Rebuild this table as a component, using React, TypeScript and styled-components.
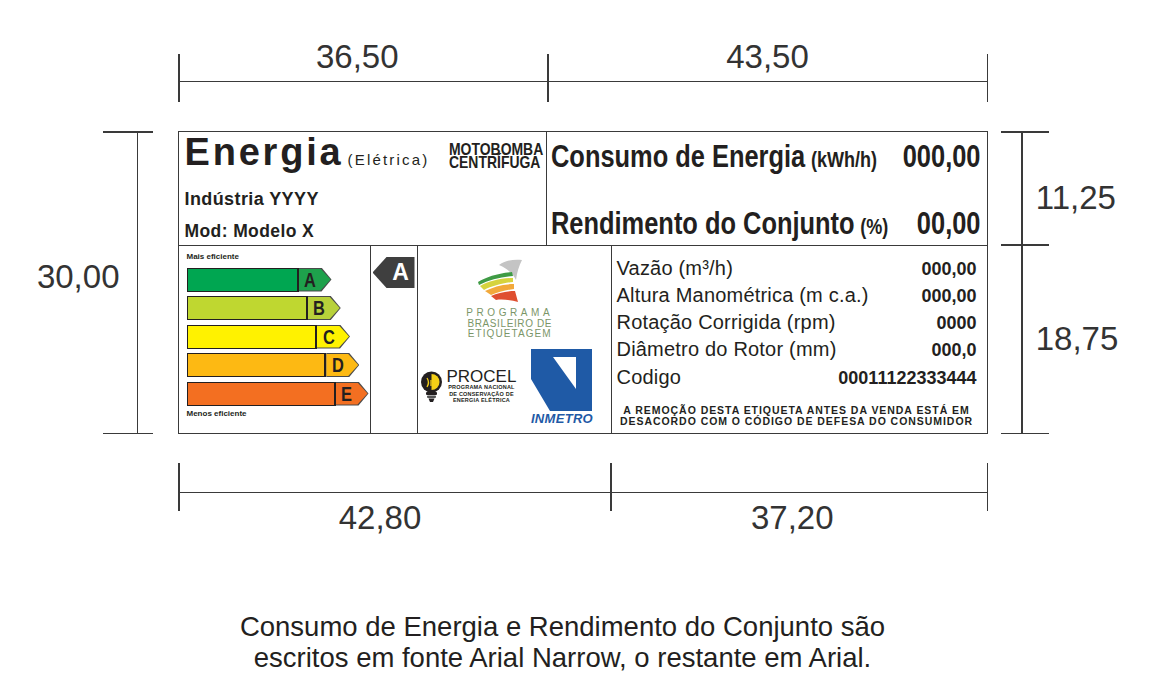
import React from 'react';
import styled, { createGlobalStyle } from 'styled-components';

const INK = '#231f20';
const RULE = '#3a3a3a';
const NARROW_SCALE = 0.82;

const GlobalStyle = createGlobalStyle`
  * { box-sizing: border-box; }
  body {
    margin: 0;
    background: #fff;
    color: ${INK};
    font-family: "Liberation Sans", Arial, sans-serif;
  }
`;

const Sheet = styled.div`
  display: grid;
  grid-template-columns: 178px 810px auto;
  grid-template-rows: 131px 303px auto;
`;

/* ---------- dimension lines ---------- */

const HDimRow = styled.div<{ $below?: boolean }>`
  grid-column: 2;
  grid-row: ${(p) => (p.$below ? 3 : 1)};
  display: flex;
  align-items: ${(p) => (p.$below ? 'flex-start' : 'flex-end')};
  align-self: start;
  padding-top: ${(p) => (p.$below ? 29 : 41)}px;
`;

const HTick = styled.div`
  flex: none;
  width: 1.5px;
  height: 48px;
  background: ${RULE};
`;

const HSpan = styled.div<{ $grow: number }>`
  flex: ${(p) => p.$grow} 1 0;
  display: flex;
  flex-direction: column;
  align-items: center;
`;

const HRule = styled.div<{ $below?: boolean }>`
  align-self: stretch;
  height: 1.5px;
  background: ${RULE};
  margin: ${(p) => (p.$below ? '28.5px 0 9px' : '7.5px 0 19.5px')};
`;

const DimValue = styled.div<{ $nudge?: number; $left?: number }>`
  font-size: 33px;
  line-height: 32px;
  color: #333;
  white-space: nowrap;
  ${(p) =>
    p.$nudge
      ? `${p.$nudge > 0 ? 'padding-top' : 'padding-bottom'}: ${Math.abs(p.$nudge) * 2}px;`
      : ''}
  ${(p) => (p.$left ? `padding-right: ${p.$left * 2}px;` : '')}
`;

const VDim = styled.div<{ $width: number; $side: 'left' | 'right' }>`
  grid-row: 2;
  grid-column: ${(p) => (p.$side === 'left' ? 1 : 3)};
  justify-self: ${(p) => (p.$side === 'left' ? 'end' : 'start')};
  margin: ${(p) => (p.$side === 'left' ? '0 25px 0 0' : '0 0 0 13px')};
  width: ${(p) => p.$width}px;
  display: flex;
  flex-direction: column;
`;

const VTick = styled.div`
  height: 1.5px;
  background: ${RULE};
`;

const VSpan = styled.div<{ $grow: number; $side: 'left' | 'right' }>`
  flex: ${(p) => p.$grow} 1 0;
  display: flex;
  align-items: center;
  flex-direction: ${(p) => (p.$side === 'left' ? 'row-reverse' : 'row')};
  ${(p) => (p.$side === 'left' ? 'padding-right: 15px;' : 'padding-left: 20.25px;')}
  gap: ${(p) => (p.$side === 'left' ? 17 : 13)}px;
`;

const Stem = styled.div`
  align-self: stretch;
  width: 1.5px;
  flex: none;
  background: ${RULE};
`;

/* ---------- the label ---------- */

const Label = styled.div`
  grid-column: 2;
  grid-row: 2;
  border: 1.5px solid ${RULE};
  display: flex;
  flex-direction: column;
  color: ${INK};
`;

const TopBand = styled.div`
  flex: none;
  height: 113.5px;
  display: flex;
  border-bottom: 1.5px solid ${RULE};
`;

const TitleCell = styled.div`
  width: 368px;
  flex: none;
  border-right: 1.5px solid ${RULE};
  padding: 2px 2px 0 5.5px;
  display: flex;
  flex-direction: column;
`;

const HeadRow = styled.div`
  display: flex;
  align-items: baseline;
`;

const Brand = styled.span`
  font-size: 38px;
  line-height: 36px;
  font-weight: 700;
  letter-spacing: 2.8px;
`;

const Kind = styled.span`
  font-size: 15px;
  line-height: 13px;
  letter-spacing: 2.2px;
  margin-left: 4px;
`;

/* Arial Narrow is not installed: squeeze Liberation Sans horizontally */
const Narrow = styled.span<{ $origin?: string }>`
  display: inline-block;
  white-space: nowrap;
  transform: scaleX(${NARROW_SCALE});
  transform-origin: ${(p) => p.$origin ?? 'left'} center;
`;

const Product = styled.div`
  align-self: flex-start;
  flex: none;
  width: 95px;
  margin: 8.5px 0 0 auto;
  font-weight: 700;
  font-size: 17px;
  line-height: 13.5px;
`;

const Maker = styled.div<{ $gap: number; $size: number }>`
  margin-top: ${(p) => p.$gap}px;
  font-size: ${(p) => p.$size}px;
  line-height: 18px;
  font-weight: 700;
  letter-spacing: 0.4px;
`;

const MetricCell = styled.div`
  flex: 1;
  min-width: 0;
  padding: 9px 6.5px 0 4px;
  display: flex;
  flex-direction: column;
  gap: 33px;
`;

const MetricRow = styled.div`
  width: calc(100% / ${NARROW_SCALE});
  transform: scaleX(${NARROW_SCALE});
  transform-origin: left center;
  display: flex;
  align-items: baseline;
  white-space: nowrap;
  font-weight: 700;
  font-size: 31px;
  line-height: 31px;
`;

const MetricUnit = styled.span`
  font-size: 22px;
  margin-left: 7px;
`;

const MetricValue = styled.span`
  margin-left: auto;
`;

const BottomBand = styled.div`
  flex: 1;
  display: flex;
`;

const Cell = styled.div<{ $width?: number }>`
  ${(p) =>
    p.$width
      ? `width: ${p.$width}px; flex: none; border-right: 1.5px solid ${RULE};`
      : 'flex: 1;'}
  display: flex;
  flex-direction: column;
`;

const ScaleCell = styled(Cell)`
  padding: 6.5px 0 0 7.5px;
`;

const ScaleNote = styled.div<{ $gap: number }>`
  margin-top: ${(p) => p.$gap}px;
  font-size: 8px;
  line-height: 9px;
  font-weight: 700;
`;

const Bars = styled.div`
  display: flex;
  flex-direction: column;
  gap: 4.5px;
  margin-top: 6.5px;
`;

const Bar = styled.div`
  display: flex;
  height: 24px;
`;

const BarFill = styled.div<{ $color: string }>`
  background: ${(p) => p.$color};
  border: 1.5px solid ${INK};
  border-right-width: 2.5px;
`;

const BarTag = styled.div`
  width: 33px;
  background: #4a4a4a;
  padding: 1px 1px 1px 0;
  display: flex;
  clip-path: polygon(0 0, 23px 0, 100% 50%, 23px 100%, 0 100%);
`;

const BarTagFace = styled.div<{ $color: string }>`
  flex: 1;
  background: ${(p) => p.$color};
  clip-path: polygon(0 0, 22px 0, 100% 50%, 22px 100%, 0 100%);
  font-weight: 700;
  font-size: 20px;
  line-height: 22px;
  padding-left: 5.5px;
`;

const IndicatorCell = styled(Cell)`
  padding: 11.5px 0 0 1.5px;
`;

const Indicator = styled.div`
  width: 42px;
  height: 31px;
  background: #3f3f3f;
  clip-path: polygon(0 50%, 14px 0, 100% 0, 100% 100%, 14px 100%);
  padding-left: 14px;
  color: #fff;
  font-weight: 700;
  font-size: 23px;
  line-height: 31px;
  text-align: center;
`;

const LogoCell = styled(Cell)`
  padding: 12px 0 0 1.5px;
`;

const Pbe = styled.div`
  align-self: center;
  margin-right: 11px;
  display: flex;
  flex-direction: column;
  align-items: center;
`;

const PbeMark = styled.svg`
  margin: 0 20px 4.5px 0;
`;

const PbeLine = styled.div<{ $spacing: number }>`
  font-size: 10px;
  line-height: 10.5px;
  letter-spacing: ${(p) => p.$spacing}px;
  color: #7b9668;
  white-space: nowrap;
`;

const SealRow = styled.div`
  display: flex;
  align-items: center;
  margin-top: 9px;
`;

const Procel = styled.div`
  display: flex;
  align-items: center;
  gap: 4px;
`;

const ProcelText = styled.div`
  display: flex;
  flex-direction: column;
  align-items: center;
`;

const ProcelName = styled.div`
  font-size: 17px;
  line-height: 15px;
`;

const ProcelFine = styled.div`
  font-size: 5.5px;
  line-height: 6.5px;
  font-weight: 700;
  letter-spacing: 0.2px;
  white-space: nowrap;
`;

const Inmetro = styled.div`
  margin: 0 18px 0 auto;
  display: flex;
  flex-direction: column;
  align-items: center;
`;

const InmetroName = styled.div`
  margin-top: 1px;
  font-size: 13px;
  line-height: 13px;
  font-weight: 700;
  font-style: italic;
  letter-spacing: 0.3px;
  color: #1f5aa6;
`;

const SpecCell = styled(Cell)`
  padding: 9px 10.5px 0 4.5px;
`;

const SpecRow = styled.div`
  display: flex;
  justify-content: space-between;
  align-items: baseline;
  line-height: 26.3px;
`;

const SpecName = styled.span`
  font-size: 20px;
  letter-spacing: 0.2px;
`;

const SpecValue = styled.span`
  font-size: 18px;
  font-weight: 700;
`;

const Notice = styled.div`
  margin-top: 14.5px;
  font-size: 10.5px;
  line-height: 11px;
  font-weight: 700;
  letter-spacing: 0.95px;
  text-align: center;
  white-space: nowrap;
`;

const Caption = styled.div`
  margin-top: 77px;
  padding-right: 26px;
  text-align: center;
  font-size: 27.5px;
  line-height: 31px;
  color: ${INK};
`;

const bars = [
  { letter: 'A', fill: '#00a651', tag: '#1ea14c' },
  { letter: 'B', fill: '#bfd730', tag: '#b8d13a' },
  { letter: 'C', fill: '#fff200', tag: '#fff200' },
  { letter: 'D', fill: '#fdb913', tag: '#fdb913' },
  { letter: 'E', fill: '#f36f21', tag: '#f36f21' },
];

const specs = [
  ['Vazão (m³/h)', '000,00'],
  ['Altura Manométrica (m c.a.)', '000,00'],
  ['Rotação Corrigida (rpm)', '0000'],
  ['Diâmetro do Rotor (mm)', '000,0'],
  ['Codigo', '00011122333444'],
];

type Part = { value: string; span: number; nudge?: number; left?: number };

const HDimension = ({ parts, below }: { parts: Part[]; below?: boolean }) => (
  <HDimRow $below={below}>
    <HTick />
    {parts.map((p) => (
      <React.Fragment key={p.value}>
        <HSpan $grow={p.span}>
          {!below && <DimValue $left={p.left}>{p.value}</DimValue>}
          <HRule $below={below} />
          {below && <DimValue $left={p.left}>{p.value}</DimValue>}
        </HSpan>
        <HTick />
      </React.Fragment>
    ))}
  </HDimRow>
);

const VDimension = ({ parts, side }: { parts: Part[]; side: 'left' | 'right' }) => (
  <VDim $side={side} $width={side === 'left' ? 50 : 48}>
    <VTick />
    {parts.map((p) => (
      <React.Fragment key={p.value}>
        <VSpan $grow={p.span} $side={side}>
          <Stem />
          <DimValue $nudge={p.nudge}>{p.value}</DimValue>
        </VSpan>
        <VTick />
      </React.Fragment>
    ))}
  </VDim>
);

const Swoosh = () => (
  <PbeMark width="46" height="46" viewBox="0 0 46 46">
    <path d="M22 7C29 2 38 1 45 2C42 8 40 14 39 22C36 16 31 11 22 7Z" fill="#c4c4c4" />
    <path d="M1 24C9 19 21 15 35 14L36 18C24 19 12 22 2 27Z" fill="#3f9b45" />
    <path d="M3 28C12 23 24 20 36 20L36 24C26 25 15 28 7 32Z" fill="#d6d33e" />
    <path d="M8 33C16 29 26 26 37 26L37 31C29 32 21 34 14 37Z" fill="#f2a93b" />
    <path d="M14 38C21 35 29 33 38 33L41 44C34 42 25 41 19 42Z" fill="#df4f30" />
  </PbeMark>
);

const Bulb = () => (
  <svg width="23" height="32" viewBox="0 0 23 32">
    <circle cx="11.5" cy="11" r="10.5" fill={INK} />
    <path d="M11.5 3A8 8 0 0 1 11.5 19Z" fill="#f4cf16" />
    <path d="M7 7C9 10 9 13 7 16M11 9V15" stroke="#f4cf16" strokeWidth="1.3" fill="none" />
    <rect x="6" y="21" width="11" height="3" rx="1" fill={INK} />
    <rect x="7" y="24.5" width="9" height="2.5" rx="1" fill="#555" />
    <path d="M8.5 27.5H14.5L13 31H10Z" fill={INK} />
  </svg>
);

const InmetroMark = () => (
  <svg width="61" height="62" viewBox="0 0 61 62">
    <path d="M0 0H61V62H19L0 30ZM22 8L45 40V8Z" fill="#1f5aa6" fillRule="evenodd" />
  </svg>
);

const App = () => (
  <>
    <GlobalStyle />
    <Sheet>
      <HDimension
        parts={[
          { value: '36,50', span: 36.5, left: 6 },
          { value: '43,50', span: 43.5 },
        ]}
      />
      <VDimension side="left" parts={[{ value: '30,00', span: 30, nudge: -6 }]} />
      <Label>
        <TopBand>
          <TitleCell>
            <HeadRow>
              <Brand>Energia</Brand>
              <Kind>(Elétrica)</Kind>
              <Product>
                <Narrow>
                  MOTOBOMBA
                  <br />
                  CENTRÍFUGA
                </Narrow>
              </Product>
            </HeadRow>
            <Maker $gap={20.3} $size={18}>Indústria YYYY</Maker>
            <Maker $gap={14} $size={17.5}>Mod: Modelo X</Maker>
          </TitleCell>
          <MetricCell>
            <MetricRow>
              Consumo de Energia
              <MetricUnit>(kWh/h)</MetricUnit>
              <MetricValue>000,00</MetricValue>
            </MetricRow>
            <MetricRow>
              Rendimento do Conjunto
              <MetricUnit>(%)</MetricUnit>
              <MetricValue>00,00</MetricValue>
            </MetricRow>
          </MetricCell>
        </TopBand>
        <BottomBand>
          <ScaleCell $width={192}>
            <ScaleNote $gap={0}>Mais eficiente</ScaleNote>
            <Bars>
              {bars.map((b, i) => (
                <Bar key={b.letter}>
                  <BarFill $color={b.fill} style={{ width: 112 + i * 9.25 }} />
                  <BarTag>
                    <BarTagFace $color={b.tag}>
                      <Narrow>{b.letter}</Narrow>
                    </BarTagFace>
                  </BarTag>
                </Bar>
              ))}
            </Bars>
            <ScaleNote $gap={3}>Menos eficiente</ScaleNote>
          </ScaleCell>
          <IndicatorCell $width={47}>
            <Indicator>A</Indicator>
          </IndicatorCell>
          <LogoCell $width={194}>
            <Pbe>
              <Swoosh />
              <PbeLine $spacing={3.6}>PROGRAMA</PbeLine>
              <PbeLine $spacing={0.6}>BRASILEIRO DE</PbeLine>
              <PbeLine $spacing={1.1}>ETIQUETAGEM</PbeLine>
            </Pbe>
            <SealRow>
              <Procel>
                <Bulb />
                <ProcelText>
                  <ProcelName>PROCEL</ProcelName>
                  <ProcelFine>PROGRAMA NACIONAL</ProcelFine>
                  <ProcelFine>DE CONSERVAÇÃO DE</ProcelFine>
                  <ProcelFine>ENERGIA ELÉTRICA</ProcelFine>
                </ProcelText>
              </Procel>
              <Inmetro>
                <InmetroMark />
                <InmetroName>INMETRO</InmetroName>
              </Inmetro>
            </SealRow>
          </LogoCell>
          <SpecCell>
            {specs.map(([name, value]) => (
              <SpecRow key={name}>
                <SpecName>{name}</SpecName>
                <SpecValue>{value}</SpecValue>
              </SpecRow>
            ))}
            <Notice>
              A REMOÇÃO DESTA ETIQUETA ANTES DA VENDA ESTÁ EM
              <br />
              DESACORDO COM O CÓDIGO DE DEFESA DO CONSUMIDOR
            </Notice>
          </SpecCell>
        </BottomBand>
      </Label>
      <VDimension
        side="right"
        parts={[
          { value: '11,25', span: 11.25, nudge: 10 },
          { value: '18,75', span: 18.75 },
        ]}
      />
      <HDimension
        below
        parts={[
          { value: '42,80', span: 42.8, left: 15 },
          { value: '37,20', span: 37.2, left: 7 },
        ]}
      />
    </Sheet>
    <Caption>
      Consumo de Energia e Rendimento do Conjunto são
      <br />
      escritos em fonte Arial Narrow, o restante em Arial.
    </Caption>
  </>
);

export default App;
